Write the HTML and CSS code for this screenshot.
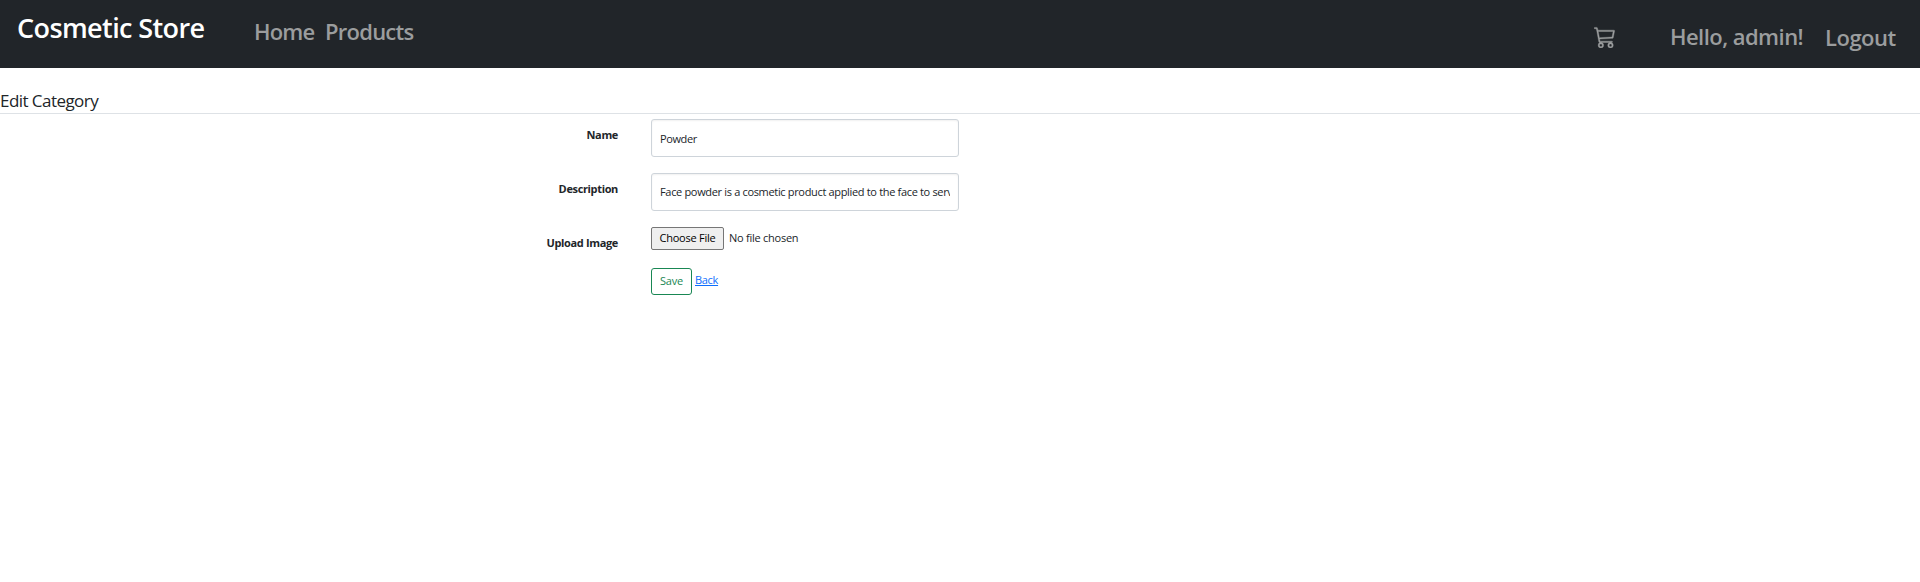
FILE: index.html
```html
<!DOCTYPE html>
<html lang="en">
<head>
<meta charset="utf-8">
<title>Edit Category - Cosmetic Store</title>
<link rel="stylesheet" href="styles.css">
</head>
<body>
<header class="navbar">
  <a class="brand">Cosmetic Store</a>
  <nav class="links">
    <a class="home">Home</a>
    <a class="products">Products</a>
  </nav>
  <div class="account">
    <svg class="cart" viewBox="0 0 16 16" width="22" height="22" fill="currentColor"><path d="M0 1.5A.5.5 0 0 1 .5 1H2a.5.5 0 0 1 .485.379L2.89 3H14.5a.5.5 0 0 1 .49.598l-1 5a.5.5 0 0 1-.465.401l-9.397.472L4.415 11H13a.5.5 0 0 1 0 1H4a.5.5 0 0 1-.491-.408L2.01 3.607 1.61 2H.5a.5.5 0 0 1-.5-.5zM3.102 4l.84 4.479 9.144-.459L13.89 4H3.102zM5 12a2 2 0 1 0 0 4 2 2 0 0 0 0-4zm7 0a2 2 0 1 0 0 4 2 2 0 0 0 0-4zm-7 1a1 1 0 1 1 0 2 1 1 0 0 1 0-2zm7 0a1 1 0 1 1 0 2 1 1 0 0 1 0-2z"/></svg>
    <a class="hello">Hello, admin!</a>
    <a class="logout">Logout</a>
  </div>
</header>
<h1 class="title"><span>Edit Category</span></h1>
<form class="form">
  <label class="label">Name</label>
  <input class="control" type="text" value="Powder">
  <label class="label">Description</label>
  <input class="control control-desc" type="text" value="Face powder is a cosmetic product applied to the face to serve different functions">
  <label class="label">Upload Image</label>
  <div class="file">
    <button class="choose" type="button">Choose File</button>
    <span class="nofile">No file chosen</span>
  </div>
  <div class="actions">
    <button class="save" type="button">Save</button>
    <a class="back">Back</a>
  </div>
</form>
</body>
</html>
```
FILE: styles.css
```css
* { box-sizing: border-box; }
body {
  margin: 0;
  background: #fff;
  color: #212529;
  font-family: "Open Sans", "Noto Sans", sans-serif;
}
.navbar {
  display: flex;
  height: 68px;
  padding-left: 17px;
  background: #212529;
  color: #9b9d9e;
  font-size: 22px;
  font-weight: 600;
  line-height: 30px;
  white-space: nowrap;
}
.brand {
  width: 237px;
  padding-top: 13px;
  color: #fff;
  font-size: 27px;
  letter-spacing: -0.6px;
}
.links { display: flex; padding-top: 16px; }
.home { width: 71px; letter-spacing: -0.8px; }
.products { letter-spacing: -0.75px; }
.account { display: flex; margin-left: auto; }
.cart { margin: 26px 54px 0 0; stroke: currentColor; stroke-width: .25; }
.hello { width: 155px; padding-top: 21px; letter-spacing: -0.55px; }
.logout { width: 95px; padding-top: 22px; letter-spacing: -0.5px; }
.title {
  height: 46px;
  margin: 0;
  padding-top: 21px;
  border-bottom: 1px solid #dee2e6;
  font-size: 17px;
  font-weight: 400;
  line-height: 24px;
  letter-spacing: -0.55px;
}
.form {
  display: grid;
  grid-template-columns: 618px 308px;
  column-gap: 33px;
  grid-template-rows: 54px 54px 41px 28px;
  padding-top: 5px;
  font-size: 11px;
  line-height: 16px;
}
.label { padding-top: 8px; text-align: right; font-weight: 700; letter-spacing: -0.35px; }
.control {
  width: 308px;
  height: 38px;
  padding: 0 8px;
  border: 1px solid #ced4da;
  border-radius: 3px;
  box-shadow: inset 0 1px 2px rgba(0,0,0,.06);
  color: #212529;
  font: 11px/16px "Open Sans", "Noto Sans", sans-serif;
  letter-spacing: -0.4px;
}
.control-desc { padding-bottom: 2px; letter-spacing: -0.33px; }
.file { display: flex; }
.choose {
  width: 73px;
  height: 23px;
  padding: 0 0 2px;
  border: 1px solid #767676;
  border-radius: 2px;
  background: #efefef;
  color: #000;
  font: 11px/16px "Open Sans", "Noto Sans", sans-serif;
  letter-spacing: -0.25px;
}
.nofile { padding: 3px 0 0 5px; letter-spacing: -0.25px; }
.actions { display: flex; grid-column: 2; }
.save {
  width: 41px;
  height: 27px;
  padding: 0 0 1px;
  border: 1px solid #198754;
  border-radius: 3px;
  background: #fff;
  color: #198754;
  font: 11px/16px "Open Sans", "Noto Sans", sans-serif;
  letter-spacing: -0.25px;
}
.back { padding: 4px 0 0 3px; color: #0d6efd; text-decoration: underline; letter-spacing: -0.3px; }
```
